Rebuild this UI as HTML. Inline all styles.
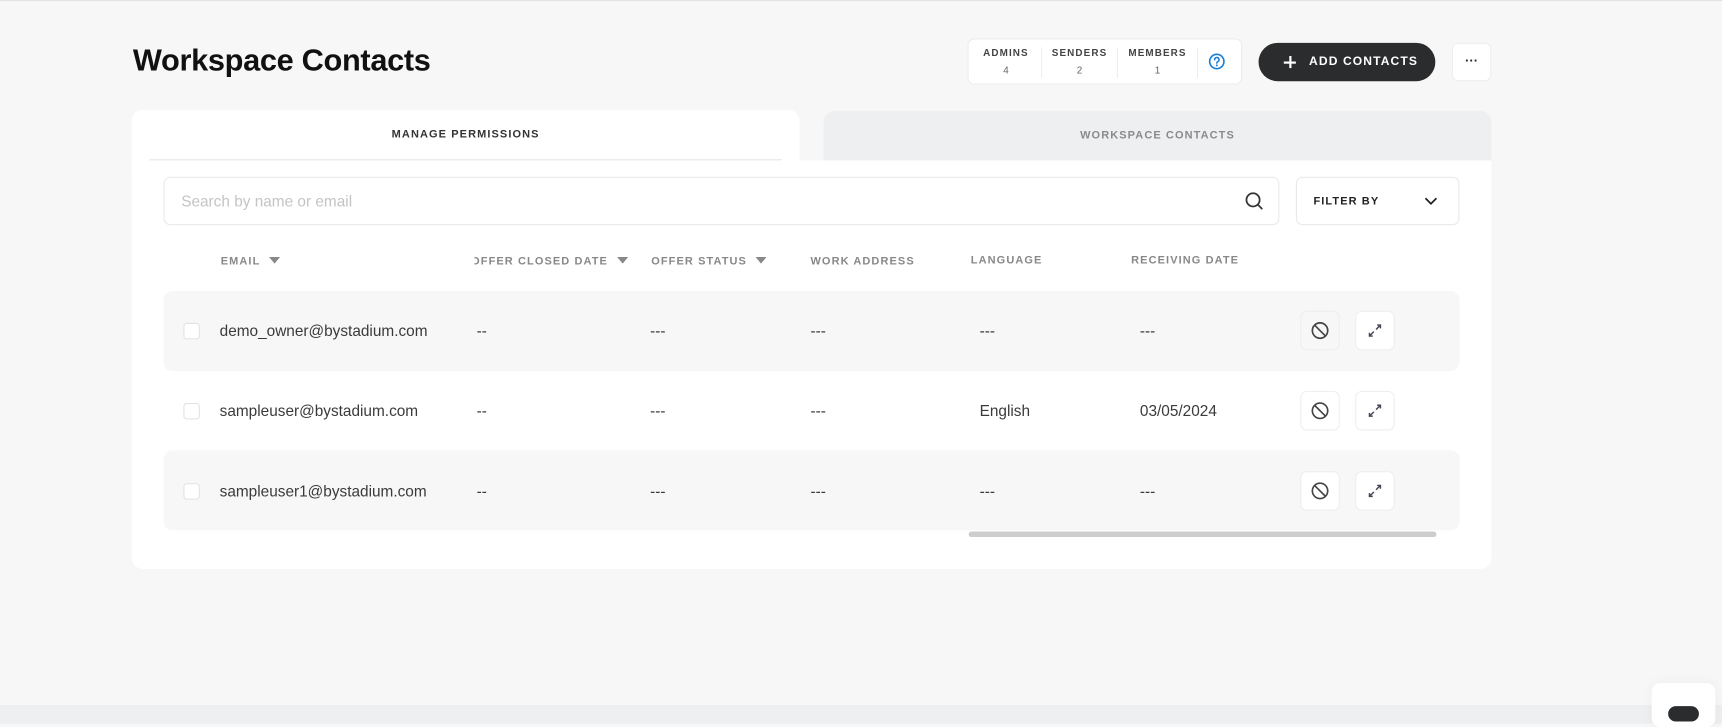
<!DOCTYPE html>
<html><head><meta charset="utf-8"><style>
*{box-sizing:border-box;margin:0;padding:0}
html,body{width:1722px;height:723px;overflow:hidden;background:#f7f7f7;font-family:"Liberation Sans",sans-serif}
#w{position:absolute;left:0;top:0;width:1568px;height:658px;transform:scale(1.0982);transform-origin:0 0;border-top:1px solid #e2e2e2}
.a{position:absolute}
.lbl{font-size:10px;font-weight:bold;letter-spacing:1px;color:#888;white-space:nowrap}
.cell{font-size:14px;color:#3a3a3a;white-space:nowrap}
.tri{display:inline-block;width:0;height:0;border-left:5px solid transparent;border-right:5px solid transparent;border-top:6px solid #888;margin-left:8px;vertical-align:1px}
.btn{position:absolute;width:36px;height:36px;border:1px solid #eee;border-radius:6px;background:#fff;display:flex;align-items:center;justify-content:center}
.row{position:absolute;left:149px;width:1180px;height:73px;border-radius:8px}
.cb{position:absolute;left:167px;width:15px;height:15px;border:1px solid #e3e3e3;border-radius:3px;background:#fff}
</style></head><body><div id="w">
<div class="a" style="left:121px;top:38px;font-size:28px;font-weight:bold;color:#111;letter-spacing:-0.3px">Workspace Contacts</div>

<div class="a" style="left:881px;top:34px;width:250px;height:42px;background:#fff;border:1px solid #ececec;border-radius:6px"></div>
<div class="a" style="left:948px;top:42px;width:1px;height:28px;background:#eee"></div>
<div class="a" style="left:1017px;top:42px;width:1px;height:28px;background:#eee"></div>
<div class="a" style="left:1090px;top:42px;width:1px;height:28px;background:#eee"></div>
<div class="a lbl" style="left:886px;width:60px;text-align:center;top:42px;font-size:9px;color:#444">ADMINS</div>
<div class="a lbl" style="left:953px;width:60px;text-align:center;top:42px;font-size:9px;color:#444">SENDERS</div>
<div class="a lbl" style="left:1024px;width:60px;text-align:center;top:42px;font-size:9px;color:#444">MEMBERS</div>
<div class="a" style="left:886px;width:60px;text-align:center;top:58px;font-size:9px;color:#666">4</div>
<div class="a" style="left:953px;width:60px;text-align:center;top:58px;font-size:9px;color:#666">2</div>
<div class="a" style="left:1024px;width:60px;text-align:center;top:58px;font-size:9px;color:#666">1</div>
<svg class="a" style="left:1100px;top:47px" width="16" height="16" viewBox="0 0 16 16"><circle cx="8" cy="8" r="6.5" fill="none" stroke="#1a7fd8" stroke-width="1.5"/><path d="M6 6.4a2 2 0 1 1 2.8 1.8c-.6.3-.8.6-.8 1.3" fill="none" stroke="#1a7fd8" stroke-width="1.4" stroke-linecap="round"/><circle cx="8" cy="11.5" r=".9" fill="#1a7fd8"/></svg>

<div class="a" style="left:1146px;top:38px;width:161px;height:35px;background:#2b2c2e;border-radius:18px;color:#fff;font-size:11px;font-weight:bold;letter-spacing:1px;line-height:35px;padding-left:46px">ADD CONTACTS</div>
<div class="a" style="left:1169px;top:55px;width:11px;height:1.6px;background:#fff"></div>
<div class="a" style="left:1174px;top:50px;width:1.6px;height:11px;background:#fff"></div>
<div class="a" style="left:1322px;top:38px;width:36px;height:35px;background:#fff;border:1px solid #eee;border-radius:6px;text-align:center;font-size:12px;font-weight:bold;line-height:30px;color:#222">···</div>

<div class="a" style="left:120px;top:99px;width:608px;height:60px;background:#fff;border-radius:10px 10px 0 0"></div>
<div class="a" style="left:750px;top:100px;width:608px;height:46px;background:#eeeff0;border-radius:10px 10px 0 0"></div>
<div class="a" style="left:120px;top:145px;width:1238px;height:372px;background:#fff;border-radius:0 0 10px 10px"></div>
<div class="a" style="left:136px;top:144px;width:576px;height:1px;background:#e6e6e6"></div>
<div class="a lbl" style="left:120px;width:608px;text-align:center;top:116px;color:#333">MANAGE PERMISSIONS</div>
<div class="a lbl" style="left:750px;width:608px;text-align:center;top:117px;color:#8a8a8a">WORKSPACE CONTACTS</div>

<div class="a" style="left:149px;top:160px;width:1016px;height:44px;border:1px solid #eaeaea;border-radius:6px"></div>
<div class="a" style="left:165px;top:174px;font-size:14px;color:#c4c4c4">Search by name or email</div>
<svg class="a" style="left:1133px;top:173px" width="18" height="18" viewBox="0 0 18 18"><circle cx="8" cy="8" r="6" fill="none" stroke="#333" stroke-width="1.6"/><path d="M12.5 12.5l3.5 3.5" stroke="#333" stroke-width="1.6" stroke-linecap="round"/></svg>
<div class="a" style="left:1180px;top:160px;width:149px;height:44px;border:1px solid #eaeaea;border-radius:6px"></div>
<div class="a lbl" style="left:1196px;top:177px;color:#222">FILTER BY</div>
<svg class="a" style="left:1297px;top:177px" width="12" height="10" viewBox="0 0 12 10"><path d="M1 2.5l5 5 5-5" fill="none" stroke="#222" stroke-width="1.6"/></svg>

<div class="a lbl" style="left:201px;top:232px">EMAIL<span class="tri"></span></div>
<div class="a" style="left:432px;top:225px;width:150px;height:25px;overflow:hidden"><div class="lbl" style="margin-left:-3px;margin-top:7px">OFFER CLOSED DATE<span class="tri"></span></div></div>
<div class="a lbl" style="left:593px;top:232px">OFFER STATUS<span class="tri"></span></div>
<div class="a lbl" style="left:738px;top:232px">WORK ADDRESS</div>
<div class="a lbl" style="left:884px;top:231px">LANGUAGE</div>
<div class="a lbl" style="left:1030px;top:231px">RECEIVING DATE</div>

<div class="row" style="top:264px;background:#f7f7f7"></div>
<div class="row" style="top:409px;background:#f7f7f7"></div>

<div class="cb" style="top:293px"></div>
<div class="cb" style="top:366px"></div>
<div class="cb" style="top:439px"></div>

<div class="a cell" style="left:200px;top:292px">demo_owner@bystadium.com</div>
<div class="a cell" style="left:200px;top:365px">sampleuser@bystadium.com</div>
<div class="a cell" style="left:200px;top:438px">sampleuser1@bystadium.com</div>
<div class="a cell" style="left:434px;top:292px">--</div><div class="a cell" style="left:434px;top:365px">--</div><div class="a cell" style="left:434px;top:438px">--</div>
<div class="a cell" style="left:592px;top:292px">---</div><div class="a cell" style="left:592px;top:365px">---</div><div class="a cell" style="left:592px;top:438px">---</div>
<div class="a cell" style="left:738px;top:292px">---</div><div class="a cell" style="left:738px;top:365px">---</div><div class="a cell" style="left:738px;top:438px">---</div>
<div class="a cell" style="left:892px;top:292px">---</div><div class="a cell" style="left:892px;top:365px">English</div><div class="a cell" style="left:892px;top:438px">---</div>
<div class="a cell" style="left:1038px;top:292px">---</div><div class="a cell" style="left:1038px;top:365px">03/05/2024</div><div class="a cell" style="left:1038px;top:438px">---</div>

<div class="btn" style="left:1184px;top:282px;background:#f7f7f7"><svg width="18" height="18" viewBox="0 0 18 18"><circle cx="9" cy="9" r="7" fill="none" stroke="#444" stroke-width="1.5"/><path d="M4 4l10 10" stroke="#444" stroke-width="1.5"/></svg></div>
<div class="btn" style="left:1234px;top:282px"><svg width="14" height="14" viewBox="0 0 14 14"><path d="M8 6l4-4M9 2h3v3M6 8l-4 4M2 9v3h3" fill="none" stroke="#445" stroke-width="1.3"/></svg></div>
<div class="btn" style="left:1184px;top:355px"><svg width="18" height="18" viewBox="0 0 18 18"><circle cx="9" cy="9" r="7" fill="none" stroke="#444" stroke-width="1.5"/><path d="M4 4l10 10" stroke="#444" stroke-width="1.5"/></svg></div>
<div class="btn" style="left:1234px;top:355px"><svg width="14" height="14" viewBox="0 0 14 14"><path d="M8 6l4-4M9 2h3v3M6 8l-4 4M2 9v3h3" fill="none" stroke="#445" stroke-width="1.3"/></svg></div>
<div class="btn" style="left:1184px;top:428px"><svg width="18" height="18" viewBox="0 0 18 18"><circle cx="9" cy="9" r="7" fill="none" stroke="#444" stroke-width="1.5"/><path d="M4 4l10 10" stroke="#444" stroke-width="1.5"/></svg></div>
<div class="btn" style="left:1234px;top:428px"><svg width="14" height="14" viewBox="0 0 14 14"><path d="M8 6l4-4M9 2h3v3M6 8l-4 4M2 9v3h3" fill="none" stroke="#445" stroke-width="1.3"/></svg></div>

<div class="a" style="left:882px;top:483px;width:426px;height:5px;background:#cdcdcd;border-radius:3px"></div>

<div class="a" style="left:0;top:641px;width:1568px;height:17px;background:#eeeff0"></div>
<div class="a" style="left:1504px;top:621px;width:58px;height:40px;background:#fff;border-radius:8px;box-shadow:0 0 12px rgba(0,0,0,.05)"></div>
<div class="a" style="left:1519px;top:642px;width:28px;height:14px;background:#2b2c2e;border-radius:7px"></div>
</div></body></html>
